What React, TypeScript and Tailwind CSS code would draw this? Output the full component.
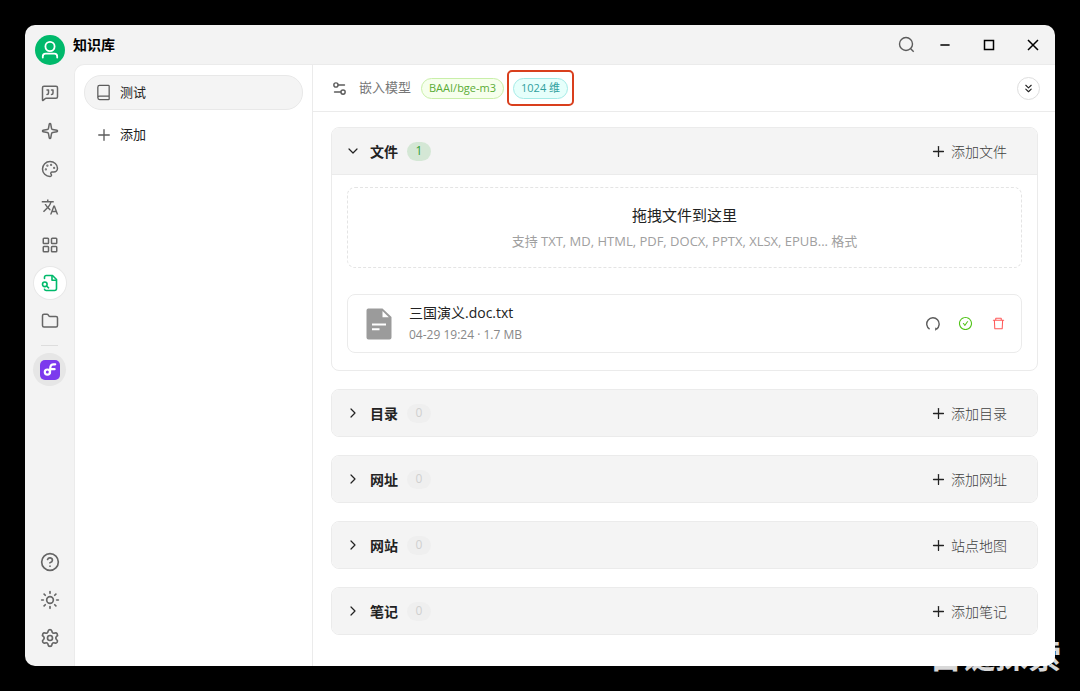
import { ReactNode, useState } from "react";
import {
  Book,
  ChevronDown,
  ChevronRight,
  ChevronsDown,
  CircleHelp,
  Folder,
  LayoutGrid,
  MessageSquareQuote,
  Minus,
  Palette,
  Plus,
  Settings,
  Settings2,
  Sparkle,
  Sun,
} from "lucide-react";
import { AiOutlineCheckCircle, AiOutlineDelete } from "react-icons/ai";
import { MdTranslate } from "react-icons/md";

function UserIcon() {
  return (
    <svg viewBox="0 0 30 30" className="size-[30px]" fill="none" stroke="white" strokeWidth="1.8">
      <circle cx="15" cy="11.5" r="4.6" />
      <path d="M7.8 22.6v-1.2a2.8 2.8 0 0 1 2.8-2.8h8.8a2.8 2.8 0 0 1 2.8 2.8v1.2" strokeLinecap="round" />
    </svg>
  );
}

function KnowledgeIcon() {
  return (
    <svg viewBox="0 0 18 18" className="size-[18px]" fill="none" stroke="currentColor" strokeWidth="1.6" strokeLinecap="round" strokeLinejoin="round">
      <path d="M3.5 4.5V3.2A1.7 1.7 0 0 1 5.2 1.5h6.3l4 4v9a2 2 0 0 1-2 2H5.2a1.7 1.7 0 0 1-1.7-1.2" />
      <path d="M11 1.8v4.4h4.3" />
      <circle cx="3.8" cy="10.3" r="2.3" />
      <path d="m5.6 12 2 1.8" />
    </svg>
  );
}

function AppLogo() {
  return (
    <svg viewBox="0 0 20 20" className="size-5">
      <rect width="20" height="20" rx="5" fill="#7c3aed" />
      <g fill="none" stroke="white" strokeWidth="2.2" strokeLinecap="round">
        <circle cx="7.4" cy="12.1" r="2.6" />
        <path d="M9.9 12.8c.3-2.600.2-4.600.6-6.200.4-1.700 1.500-2.300 3-2.300h1.700" />
        <path d="M10.6 9.2h4" />
      </g>
    </svg>
  );
}

function DocumentIcon() {
  return (
    <svg viewBox="0 0 26 32" className="h-8 w-[26px] shrink-0">
      <path d="M2 .5h14.5L25.5 9v20.5a2 2 0 0 1-2 2h-21a2 2 0 0 1-2-2v-27a2 2 0 0 1 1.5-2Z" fill="#9b9b9b" />
      <path d="M16.5 3v6.3h6.3Z" fill="white" />
      <path d="M6 16.5h14M6 21.3h7.5" stroke="white" strokeWidth="2" />
    </svg>
  );
}

function RefreshIcon() {
  return (
    <svg viewBox="0 0 14 14" className="size-3.5" fill="none" stroke="currentColor" strokeWidth="1.4">
      <path d="M3.6 12.2A6.2 6.2 0 1 1 10.6 12" />
      <path d="m9 13.7.3-3.2 2.8 1.2Z" fill="currentColor" stroke="none" />
    </svg>
  );
}

function SearchIcon() {
  return (
    <svg viewBox="0 0 17 17" className="size-[17px]" fill="none" stroke="currentColor" strokeWidth="1.4">
      <circle cx="8" cy="8" r="6.5" />
      <path d="m12.7 12.7 3 3" />
    </svg>
  );
}

const menu = [
  { label: "助手", icon: <MessageSquareQuote size={18} strokeWidth={2} /> },
  { label: "智能体", icon: <Sparkle size={18} strokeWidth={2} /> },
  { label: "绘画", icon: <Palette size={18} strokeWidth={2} /> },
  { label: "翻译", icon: <MdTranslate size={18} /> },
  { label: "小程序", icon: <LayoutGrid size={18} strokeWidth={2} /> },
  { label: "知识库", icon: <KnowledgeIcon />, active: true },
  { label: "文件", icon: <Folder size={18} strokeWidth={2} /> },
];

const footerMenu = [
  { label: "帮助", icon: <CircleHelp size={20} strokeWidth={2} /> },
  { label: "主题", icon: <Sun size={20} strokeWidth={2} /> },
  { label: "设置", icon: <Settings size={20} strokeWidth={2} /> },
];

const sections = [
  { title: "目录", action: "添加目录" },
  { title: "网址", action: "添加网址" },
  { title: "网站", action: "站点地图" },
  { title: "笔记", action: "添加笔记" },
];

function MenuButton({ label, active, children }: { label: string; active?: boolean; children: ReactNode }) {
  return (
    <button
      aria-label={label}
      className={
        active
          ? "flex size-8 items-center justify-center rounded-full bg-white text-[#00b96b] ring-1 ring-[#e8e8e8]"
          : "flex size-8 items-center justify-center rounded-full text-[#666666]"
      }
    >
      {children}
    </button>
  );
}

function Section({
  title,
  action,
  count = 0,
  defaultOpen = false,
  children,
}: {
  title: string;
  action: string;
  count?: number;
  defaultOpen?: boolean;
  children?: ReactNode;
}) {
  const [open, setOpen] = useState(defaultOpen);

  return (
    <section className="overflow-hidden rounded-lg border border-[#ebebeb]">
      <div className="flex h-[46px] items-center justify-between bg-[#f4f4f4] pr-[30px] pl-[13px]">
        <button onClick={() => setOpen(!open)} className="flex items-center">
          {open ? <ChevronDown size={16} strokeWidth={1.8} /> : <ChevronRight size={16} strokeWidth={1.8} />}
          <span className="ml-[9px] text-[14px] font-bold">{title}</span>
          <span
            className={
              count > 0
                ? "ml-[9px] flex h-[19px] w-6 items-center justify-center rounded-full bg-[#d4e7d5] text-[12px] text-[#2f9e35]"
                : "ml-[9px] flex h-[19px] w-6 items-center justify-center rounded-full bg-[#efefef] text-[12px] text-[#cfcfcf]"
            }
          >
            {count}
          </span>
        </button>
        <button className="flex items-center gap-1 text-[14px] font-light text-[#404040]">
          <Plus size={17} strokeWidth={1.8} className="text-[#222222]" />
          {action}
        </button>
      </div>
      {open && <div className="border-t border-[#ebebeb] px-[15px] pt-3 pb-[17px]">{children}</div>}
    </section>
  );
}

export default function App() {
  return (
    <div className="relative flex min-h-screen bg-black p-[25px] font-['Open_Sans','Noto_Sans_CJK_SC',sans-serif] text-[#222222]">
      <div className="flex flex-1 flex-col overflow-hidden rounded-[10px] bg-[#f3f3f3]">
        <header className="flex h-[39px] items-center pr-[15px] pl-12">
          <h1 className="mr-auto text-[14px] font-bold text-black">知识库</h1>
          <button aria-label="搜索" className="mr-[23px] text-[#5c5c5c]">
            <SearchIcon />
          </button>
          <div className="flex items-center gap-[30px] text-black">
            <button aria-label="最小化">
              <Minus size={14} strokeWidth={2.5} />
            </button>
            <button aria-label="最大化">
              <svg viewBox="0 0 14 14" className="size-3.5" fill="none" stroke="currentColor" strokeWidth="1.5">
                <rect x="2.5" y="2.5" width="9" height="9" />
              </svg>
            </button>
            <button aria-label="关闭">
              <svg viewBox="0 0 14 14" className="size-3.5" stroke="currentColor" strokeWidth="1.5">
                <path d="m2 2 10 10M12 2 2 12" />
              </svg>
            </button>
          </div>
        </header>

        <div className="flex flex-1">
          <nav className="-mt-[29px] flex w-[49px] flex-col items-center pb-3">
            <button aria-label="账户" className="rounded-full bg-[#00b96b]">
              <UserIcon />
            </button>
            <div className="mt-3 flex flex-col gap-[6px]">
              {menu.map((item) => (
                <MenuButton key={item.label} label={item.label} active={item.active}>
                  {item.icon}
                </MenuButton>
              ))}
            </div>
            <div className="mt-2 h-px w-[17px] bg-[#dddddd]" />
            <button
              aria-label="应用"
              className="mt-[7px] flex size-[33px] items-center justify-center rounded-full bg-[#e6e6e6]"
            >
              <AppLogo />
            </button>
            <div className="mt-auto flex flex-col gap-[6px]">
              {footerMenu.map((item) => (
                <MenuButton key={item.label} label={item.label}>
                  {item.icon}
                </MenuButton>
              ))}
            </div>
          </nav>

          <main className="flex flex-1 overflow-hidden rounded-tl-[10px] border-t border-l border-[#ebebeb] bg-white">
            <aside className="w-[238px] shrink-0 border-r border-[#ebebeb] px-[9px] pt-[10px] text-[13px]">
              <button className="flex h-[35px] w-full items-center gap-2 rounded-[17px] border border-[#e8e8e8] bg-[#f4f4f4] px-[10px]">
                <Book size={17} strokeWidth={1.8} className="text-[#5c5c5c]" />
                测试
              </button>
              <button className="mt-[7px] flex h-[35px] w-full items-center gap-[7px] px-[11px]">
                <Plus size={18} strokeWidth={1.8} className="text-[#5c5c5c]" />
                添加
              </button>
            </aside>

            <div className="flex-1">
              <div className="flex h-[47px] items-center border-b border-[#ebebeb] pr-[15px] pl-[18px]">
                <Settings2 size={17} strokeWidth={2} className="text-[#5c5c5c]" />
                <span className="ml-[11px] text-[13px] text-[#777777]">嵌入模型</span>
                <span className="ml-[10px] flex h-[21px] items-center rounded-full border border-[#c9efa9] bg-[#f6ffed] px-[7px] text-[11px] text-[#5aac35]">
                  BAAI/bge-m3
                </span>
                <span className="ml-[3px] flex h-9 items-center rounded-[5px] border-2 border-[#d93f1d] px-1">
                  <span className="flex h-[21px] items-center rounded-full border border-[#a4ebe7] bg-[#e6fffb] px-[7px] text-[11px] text-[#319f9f]">
                    1024 维
                  </span>
                </span>
                <button
                  aria-label="全部展开"
                  className="ml-auto flex size-[23px] items-center justify-center rounded-full border border-[#dedede]"
                >
                  <ChevronsDown size={13} />
                </button>
              </div>

              <div className="flex flex-col gap-[18px] py-[15px] pr-[17px] pl-[18px]">
                <Section title="文件" action="添加文件" count={1} defaultOpen>
                  <div className="flex h-[81px] flex-col items-center justify-center rounded-lg border border-dashed border-[#e4e4e4]">
                    <p className="text-[15px] leading-[26px]">拖拽文件到这里</p>
                    <p className="text-[13px] leading-[26px] text-[#a0a0a0]">
                      支持 TXT, MD, HTML, PDF, DOCX, PPTX, XLSX, EPUB... 格式
                    </p>
                  </div>
                  <div className="mt-[26px] flex h-[59px] items-center rounded-lg border border-[#ebebeb] pr-[15px] pl-[18px]">
                    <DocumentIcon />
                    <div className="ml-[17px]">
                      <p className="text-[14px] leading-[22px]">三国演义.doc.txt</p>
                      <p className="text-[12px] leading-[22px] text-[#888888]">04-29 19:24 · 1.7 MB</p>
                    </div>
                    <div className="ml-auto flex items-center gap-[18px]">
                      <button aria-label="刷新" className="text-[#5c5c5c]">
                        <RefreshIcon />
                      </button>
                      <AiOutlineCheckCircle size={15} className="text-[#52c41a]" />
                      <button aria-label="删除" className="text-[#ff5a5a]">
                        <AiOutlineDelete size={15} />
                      </button>
                    </div>
                  </div>
                </Section>
                {sections.map((section) => (
                  <Section key={section.title} title={section.title} action={section.action} />
                ))}
              </div>
            </div>
          </main>
        </div>
      </div>

      <p className="pointer-events-none absolute right-[19px] bottom-[18px] text-[33px] leading-[35px] font-bold text-white/85">
        百链探索
      </p>
    </div>
  );
}
